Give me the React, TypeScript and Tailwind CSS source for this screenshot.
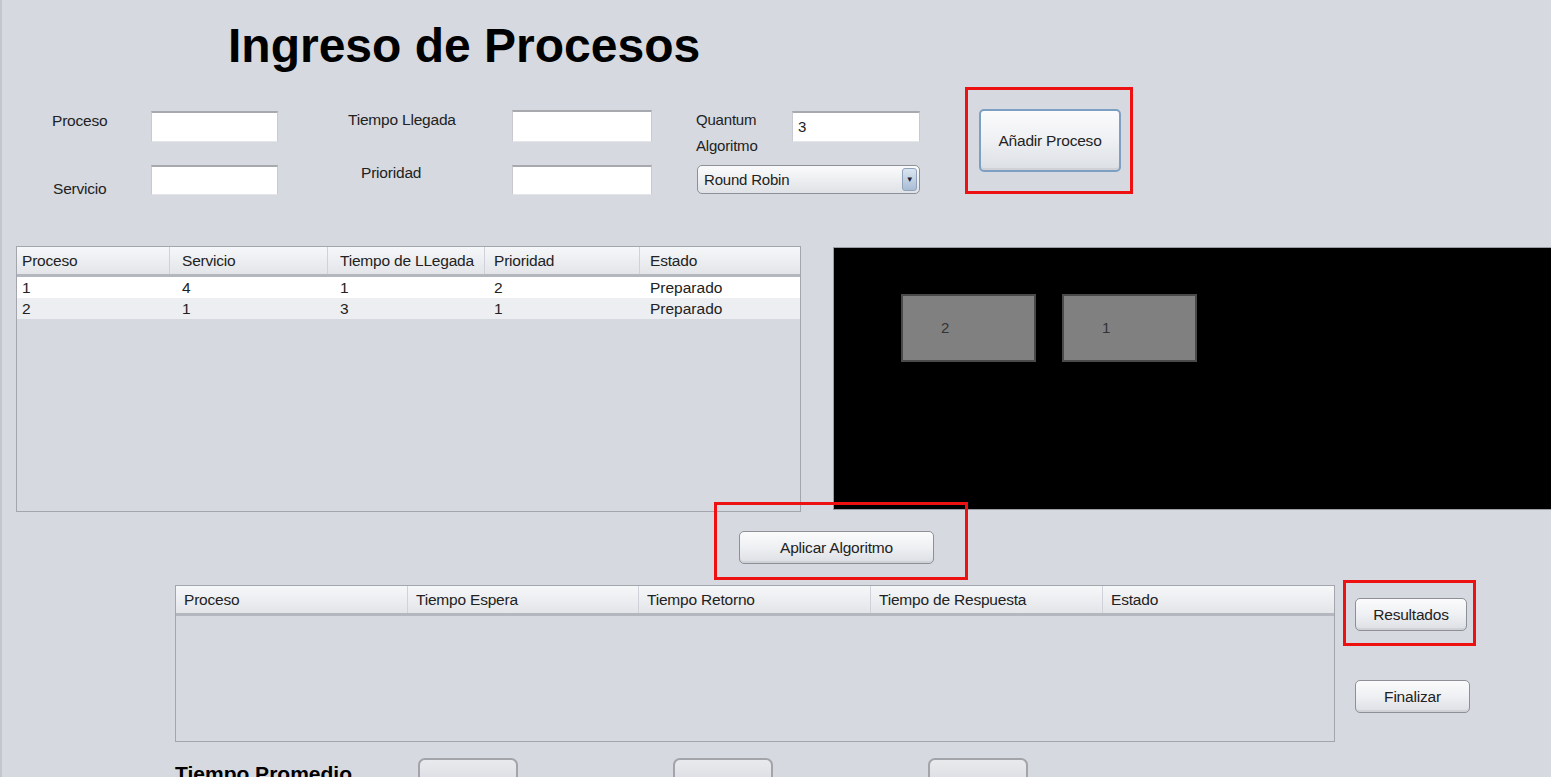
import React from "react"

const font = "font-['Liberation_Sans',Arial,sans-serif]"

function TextInput({ w, h, value }: { w: number; h: number; value?: string }) {
  return (
    <div
      className="flex items-center bg-white border-t-2 border-t-[#a7a9ae] border-x border-x-[#c8cacf] border-b border-b-[#e4e5e8] pl-[5px] text-[15px] text-[#222]"
      style={{ width: w, height: h }}>
      {value}
    </div>
  )
}

function Button({ label, w, h, focused }: { label: string; w: number; h: number; focused?: boolean }) {
  return (
    <div
      className={`flex items-center justify-center rounded-[5px] bg-gradient-to-b from-[#fbfbfc] via-[#eef0f3] to-[#dcdfe4] text-[15.5px] tracking-[-0.2px] text-[#222] shadow-[inset_0_-2px_0_rgba(0,0,0,0.06)] ${
        focused ? "border-2 border-[#7d9fc2]" : "border border-[#8d9096]"
      }`}
      style={{ width: w, height: h }}>
      {label}
    </div>
  )
}

export default function App() {
  const procesos = [
    { proceso: "1", servicio: "4", llegada: "1", prioridad: "2", estado: "Preparado" },
    { proceso: "2", servicio: "1", llegada: "3", prioridad: "1", estado: "Preparado" },
  ]
  const cols1 = [
    { name: "Proceso", w: 153, pl: 5 },
    { name: "Servicio", w: 158, pl: 12 },
    { name: "Tiempo de LLegada", w: 157, pl: 12 },
    { name: "Prioridad", w: 155, pl: 9 },
    { name: "Estado", w: 160, pl: 10 },
  ]
  const cols2 = [
    { name: "Proceso", w: 232 },
    { name: "Tiempo Espera", w: 231 },
    { name: "Tiempo Retorno", w: 232 },
    { name: "Tiempo de Respuesta", w: 232 },
    { name: "Estado", w: 231 },
  ]

  return (
    <div className={`h-[777px] w-[1551px] overflow-hidden bg-[#d6d9e0] border-l-2 border-l-[#c3c6cd] text-[#222] ${font}`}>
      {/* Titulo */}
      <h1 className="ml-[226px] pt-[22px] text-[48px] leading-[48px] font-bold text-black">Ingreso de Procesos</h1>

      {/* Formulario */}
      <div className="mt-[17px] flex h-[108px] items-start text-[15.5px] leading-[18px] tracking-[-0.2px]">
        <div className="ml-[50px] flex w-[99px] flex-col">
          <span className="mt-[25px]">Proceso</span>
          <span className="mt-[50px] pl-[1px]">Servicio</span>
        </div>
        <div className="flex flex-col">
          <div className="mt-[24px]">
            <TextInput w={127} h={31} />
          </div>
          <div className="mt-[23px]">
            <TextInput w={127} h={30} />
          </div>
        </div>
        <div className="ml-[70px] flex w-[164px] flex-col">
          <span className="mt-[24px]">Tiempo Llegada</span>
          <span className="mt-[35px] pl-[13px]">Prioridad</span>
        </div>
        <div className="flex flex-col">
          <div className="mt-[23px]">
            <TextInput w={140} h={32} />
          </div>
          <div className="mt-[23px]">
            <TextInput w={140} h={30} />
          </div>
        </div>
        <div className="ml-[44px] flex w-[224px] flex-col">
          <div className="mt-[24px] flex items-start">
            <div className="flex w-[96px] flex-col text-[15px]">
              <span>Quantum</span>
              <span className="mt-[8px]">Algoritmo</span>
            </div>
            <TextInput w={128} h={31} value="3" />
          </div>
          <div className="ml-[1px] mt-[10px] flex h-[29px] w-[223px] items-center justify-between rounded-[5px] border border-[#8d9096] bg-gradient-to-b from-[#fbfbfc] to-[#dfe2e6] pl-[6px] pr-[2px] text-[15px]">
            <span>Round Robin</span>
            <div className="flex h-[23px] w-[15px] items-center justify-center rounded-[3px] border border-[#8ea3bb] bg-gradient-to-b from-[#dbe5f0] to-[#a9bdd4] text-[8px] text-[#223]">
              ▼
            </div>
          </div>
        </div>
        <div className="ml-[45px] h-[107px] w-[168px] border-[3px] border-[#ee1111] pl-[11px] pt-[19px]">
          <Button label="Añadir Proceso" w={142} h={63} focused />
        </div>
      </div>

      {/* Tabla de procesos y panel */}
      <div className="mt-[51px] flex items-start">
        <div className="ml-[14px] h-[266px] w-[785px] border border-[#a3a6ad] bg-[#d6d9e0]">
          <div className="flex h-[30px] border-b-[3px] border-b-[#b4b7be] bg-gradient-to-b from-[#f6f7f9] to-[#e3e5e9] text-[15.5px] tracking-[-0.2px]">
            {cols1.map((c, i) => (
              <div
                key={c.name}
                className={`flex items-center ${i < cols1.length - 1 ? "border-r border-r-[#cfd2d8]" : ""}`}
                style={{ width: c.w, paddingLeft: c.pl }}>
                {c.name}
              </div>
            ))}
          </div>
          {procesos.map((p, r) => (
            <div key={p.proceso} className={`flex h-[21px] items-center text-[15.5px] ${r === 0 ? "bg-white" : "bg-[#eceef2]"}`}>
              {[p.proceso, p.servicio, p.llegada, p.prioridad, p.estado].map((v, i) => (
                <div key={i} style={{ width: cols1[i].w, paddingLeft: cols1[i].pl }}>
                  {v}
                </div>
              ))}
            </div>
          ))}
        </div>
        <div className="ml-[32px] mt-[1px] flex h-[263px] flex-1 gap-[26px] border-l border-t border-b border-[#9a9da4] bg-black pl-[67px] pt-[46px]">
          {["2", "1"].map(n => (
            <div key={n} className="flex h-[68px] w-[135px] items-center border-2 border-[#4a4a4a] bg-[#808080] pl-[38px] text-[15px] text-[#333]">
              {n}
            </div>
          ))}
        </div>
      </div>

      {/* Aplicar */}
      <div className="relative ml-[712px] mt-[-10px] h-[78px] w-[254px] border-[3px] border-[#ee1111] pl-[22px] pt-[26px]">
        <Button label="Aplicar Algoritmo" w={195} h={33} />
      </div>

      {/* Resultados */}
      <div className="flex items-start">
        <div className="ml-[173px] mt-[5px] h-[157px] w-[1160px] border border-[#a3a6ad]">
          <div className="flex h-[30px] border-b-[3px] border-b-[#b4b7be] bg-gradient-to-b from-[#f6f7f9] to-[#e3e5e9] text-[15.5px] tracking-[-0.2px]">
            {cols2.map((c, i) => (
              <div
                key={c.name}
                className={`flex items-center pl-[8px] ${i < cols2.length - 1 ? "border-r border-r-[#cfd2d8]" : ""}`}
                style={{ width: c.w }}>
                {c.name}
              </div>
            ))}
          </div>
        </div>
        <div className="ml-[8px] flex flex-col">
          <div className="h-[66px] w-[133px] border-[3px] border-[#ee1111] pl-[9px] pt-[15px]">
            <Button label="Resultados" w={112} h={33} />
          </div>
          <div className="ml-[12px] mt-[34px]">
            <Button label="Finalizar" w={115} h={33} />
          </div>
        </div>
      </div>

      {/* Tiempo promedio */}
      <div className="mt-[16px] flex items-start">
        <div className="ml-[173px] mt-[4px] w-[243px] text-[21px] leading-[24px] font-bold text-black">Tiempo Promedio</div>
        <div className="flex gap-[155px]">
          {[0, 1, 2].map(i => (
            <div key={i} className="h-[34px] w-[100px] rounded-[7px] border-2 border-[#a2a4a9] bg-gradient-to-b from-[#e9eaed] to-[#d6d9e0]" />
          ))}
        </div>
      </div>
    </div>
  )
}
